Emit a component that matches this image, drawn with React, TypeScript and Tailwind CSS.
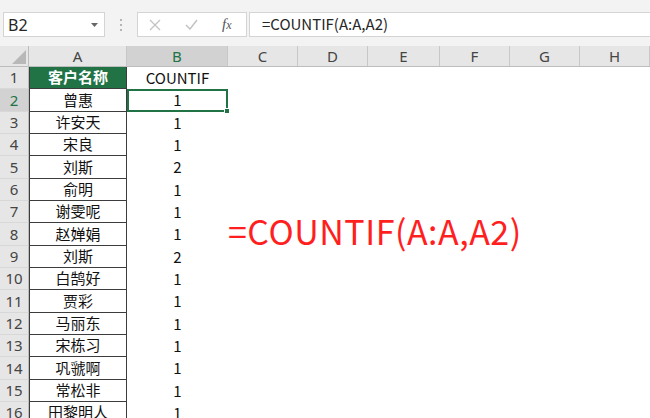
const rows: [string, string][] = [
  ["客户名称", "COUNTIF"],
  ["曾惠", "1"],
  ["许安天", "1"],
  ["宋良", "1"],
  ["刘斯", "2"],
  ["俞明", "1"],
  ["谢雯呢", "1"],
  ["赵婵娟", "1"],
  ["刘斯", "2"],
  ["白鹄好", "1"],
  ["贾彩", "1"],
  ["马丽东", "1"],
  ["宋栋习", "1"],
  ["巩虢啊", "1"],
  ["常松非", "1"],
  ["田黎明人", "1"],
];

const cols = [
  { name: "A", w: "w-[98px]" },
  { name: "B", w: "w-[101px]" },
  { name: "C", w: "w-[70px]" },
  { name: "D", w: "w-[70px]" },
  { name: "E", w: "w-[72px]" },
  { name: "F", w: "w-[70px]" },
  { name: "G", w: "w-[70px]" },
  { name: "H", w: "w-[70px]" },
];

const cellFont = { fontFamily: '"Noto Sans CJK SC", "Noto Sans", sans-serif' };

const FormulaBar = () => (
  <div className="flex h-[46px] items-start bg-[#f3f3f3] pt-[12px] pl-[3px]">
    <div className="flex h-[25px] w-[102px] items-center justify-between border border-[#d4d4d4] bg-white pl-[4px] pr-[6px]">
      <span className="text-[16px] text-[#262626]" style={{ fontFamily: '"Noto Sans", sans-serif' }}>
        B2
      </span>
      <svg width="7" height="4" viewBox="0 0 7 4">
        <path d="M0 0h7L3.5 4z" fill="#666" />
      </svg>
    </div>
    <div className="flex h-[25px] w-[32px] flex-col items-center justify-center gap-[3px]">
      <span className="h-[2px] w-[2px] bg-[#b5b5b5]" />
      <span className="h-[2px] w-[2px] bg-[#b5b5b5]" />
      <span className="h-[2px] w-[2px] bg-[#b5b5b5]" />
    </div>
    <div className="flex h-[25px] w-[110px] items-center border border-[#d4d4d4] bg-white">
      <svg className="ml-[11px]" width="12" height="12" viewBox="0 0 12 12">
        <path d="M1 1l10 10M11 1L1 11" stroke="#c3c3c3" strokeWidth="1.3" fill="none" />
      </svg>
      <svg className="ml-[24px]" width="13" height="11" viewBox="0 0 13 11">
        <path d="M1 6l4 4 7-9" stroke="#c3c3c3" strokeWidth="1.5" fill="none" />
      </svg>
      <span
        className="ml-[24px] text-[15px] italic text-[#555]"
        style={{ fontFamily: '"Liberation Serif", serif' }}
      >
        f<span className="text-[12px]">x</span>
      </span>
    </div>
    <div className="ml-[2px] flex h-[25px] flex-1 items-center border border-r-0 border-[#d4d4d4] bg-white pl-[12px]">
      <span className="text-[15px] text-[#262626]" style={cellFont}>
        =COUNTIF(A:A,A2)
      </span>
    </div>
  </div>
);

const HeaderRow = () => (
  <div className="flex h-[21px] border-b border-[#bdbdbd] bg-[#e6e6e6]">
    <div className="relative w-[29px] border-r border-[#bdbdbd]">
      <svg className="absolute right-[2px] bottom-[2px]" width="14" height="14" viewBox="0 0 14 14">
        <path d="M14 0v14H0z" fill="#b8b8b8" />
      </svg>
    </div>
    {cols.map((c) => (
      <div
        key={c.name}
        className={`${c.w} flex items-center justify-center border-r border-[#c8c8c8] text-[15px] ${
          c.name === "B" ? "bg-[#d2d2d2] text-[#217346]" : "text-[#444]"
        }`}
        style={{ fontFamily: '"Noto Sans", sans-serif' }}
      >
        {c.name}
      </div>
    ))}
  </div>
);

export default function App() {
  return (
    <div className="relative h-[418px] w-[650px] overflow-hidden bg-white">
      <FormulaBar />
      <HeaderRow />
      <div className="flex flex-col">
        {rows.map(([name, count], i) => {
          const n = i + 1;
          const selected = n === 2;
          return (
            <div key={n} className="flex h-[22.33px]">
              <div
                className={`flex w-[29px] shrink-0 items-center justify-center border-r border-b border-r-[#bdbdbd] border-b-[#d8d8d8] text-[15px] ${
                  selected ? "bg-[#d2d2d2] text-[#217346]" : "bg-[#e6e6e6] text-[#444]"
                }`}
                style={{ fontFamily: '"Noto Sans", sans-serif' }}
              >
                {n}
              </div>
              <div
                className={`flex w-[98px] shrink-0 items-center justify-center border-x border-b border-[#3c3c3c] text-[15px] ${
                  n === 1 ? "bg-[#217346] font-bold text-white" : "text-[#111]"
                }`}
                style={cellFont}
              >
                {name}
              </div>
              <div
                className={`relative flex w-[101px] shrink-0 items-center justify-center text-[15px] text-[#111] ${
                  selected ? "border-2 border-[#217346]" : ""
                }`}
                style={cellFont}
              >
                {count}
                {selected && (
                  <span className="absolute -right-[4px] -bottom-[4px] h-[6px] w-[6px] border border-white bg-[#217346]" />
                )}
              </div>
            </div>
          );
        })}
      </div>
      {/* formula note floating over the sheet */}
      <div
        className="absolute left-[228px] top-[214px] text-[34px] leading-none tracking-[0.5px] text-[#ff1f1f]"
        style={cellFont}
      >
        =COUNTIF(A:A,A2)
      </div>
    </div>
  );
}
